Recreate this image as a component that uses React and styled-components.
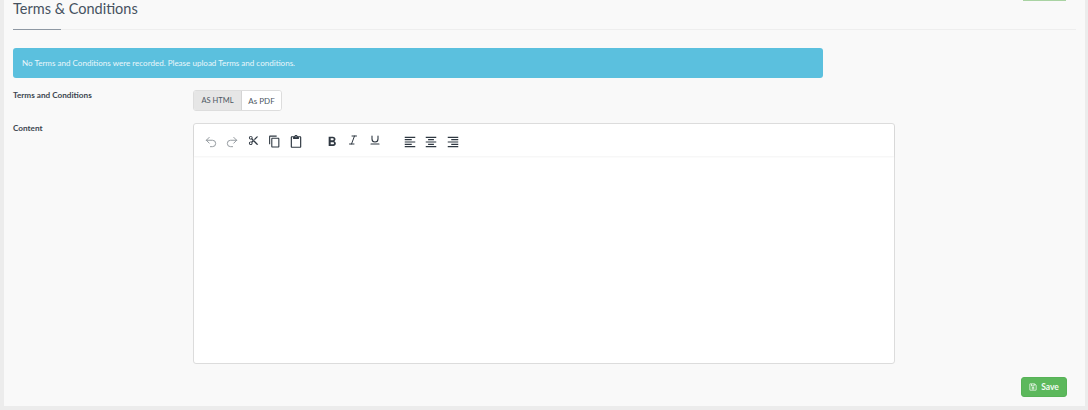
import React from "react";
import styled, { createGlobalStyle } from "styled-components";
import { Undo2, Redo2, Italic, Underline } from "lucide-react";
import {
  MdContentCut,
  MdOutlineContentCopy,
  MdOutlineContentPaste,
  MdFormatBold,
  MdFormatAlignLeft,
  MdFormatAlignCenter,
  MdFormatAlignRight,
} from "react-icons/md";
import { FaRegSave } from "react-icons/fa";

const GlobalStyle = createGlobalStyle`
  html, body {
    margin: 0;
    padding: 0;
    height: 410px;
    overflow: hidden;
    background: #ececec;
    font-family: Lato, "Liberation Sans", sans-serif;
    color: #3a4450;
  }
`;

const Page = styled.div`
  height: 410px;
  padding: 0 3px 4px 4px;
  box-sizing: border-box;
`;

const Panel = styled.div`
  height: 100%;
  background: #f9f9f9;
  padding: 0 9px 0 9px;
  box-sizing: border-box;
  display: flex;
  flex-direction: column;
`;

const Header = styled.div`
  position: relative;
  height: 30px;
  box-sizing: border-box;
  border-bottom: 1px solid #eeeeee;
  display: flex;
  justify-content: space-between;
  align-items: flex-start;
  &::after {
    content: "";
    position: absolute;
    left: 0;
    bottom: -1px;
    width: 48px;
    height: 1px;
    background: #8e98a3;
  }
`;

const Title = styled.h1`
  margin: 0;
  font-size: 14.5px;
  line-height: 17px;
  font-weight: 400;
  color: #46525f;
`;

const TopButton = styled.div`
  width: 43px;
  height: 1px;
  margin-right: 10px;
  background: #a9d3a3;
`;

const Alert = styled.div`
  width: 810px;
  height: 30px;
  margin-top: 18px;
  padding-left: 9px;
  box-sizing: border-box;
  display: flex;
  align-items: center;
  background: #5bc0de;
  border-radius: 3px;
  color: #eaf7fb;
  font-size: 8.05px;
`;

const Row = styled.div`
  display: grid;
  grid-template-columns: 180px 702px;
  margin-top: 12px;
`;

const Label = styled.label`
  font-size: 8.2px;
  line-height: 11px;
  font-weight: 700;
  color: #3c4650;
`;

const Toggle = styled.div`
  display: flex;
  height: 21px;
  width: 89px;
  box-sizing: border-box;
  border: 1px solid #dddddd;
  border-radius: 3px;
  overflow: hidden;
  background: #fff;
`;

const ToggleOption = styled.div`
  flex: ${(p) => (p.$active ? "0 0 47px" : "1")};
  display: flex;
  align-items: center;
  justify-content: center;
  font-size: ${(p) => (p.$active ? 7.5 : 8)}px;
  color: #4d5762;
  background: ${(p) => (p.$active ? "#e6e6e6" : "#fff")};
  border-right: ${(p) => (p.$active ? "1px solid #d4d4d4" : "none")};
`;

const Editor = styled.div`
  height: 241px;
  box-sizing: border-box;
  background: #fff;
  border: 1px solid #dcdcdc;
  border-radius: 3px;
`;

const Toolbar = styled.div`
  height: 32px;
  box-sizing: border-box;
  padding: 3px 0 0 6px;
  display: flex;
  align-items: center;
  box-shadow: 0 1px 2px rgba(0, 0, 0, 0.05);
`;

const ToolGroup = styled.div`
  display: flex;
  margin-right: ${(p) => p.$gap}px;
`;

const Tool = styled.span`
  width: 21.3px;
  display: flex;
  justify-content: center;
  font-size: ${(p) => p.$size || 14}px;
  color: ${(p) => (p.$muted ? "#8d9399" : "#2f3842")};
  svg {
    display: block;
  }
`;

const Footer = styled.div`
  display: flex;
  justify-content: flex-end;
  margin-top: 13px;
  padding-right: 9px;
`;

const SaveButton = styled.button`
  width: 46px;
  height: 20px;
  padding: 0;
  border: 1px solid #57b257;
  border-radius: 3px;
  background: #5cb85c;
  color: #f2faf2;
  font-family: inherit;
  font-size: 8.5px;
  font-weight: 700;
  display: flex;
  align-items: center;
  justify-content: center;
  gap: 4px;
`;

export default function App() {
  return (
    <>
      <GlobalStyle />
      <Page>
        <Panel>
          <Header>
            <Title>Terms &amp; Conditions</Title>
            <TopButton />
          </Header>
          <Alert>No Terms and Conditions were recorded. Please upload Terms and conditions.</Alert>
          <Row>
            <Label>Terms and Conditions</Label>
            <Toggle>
              <ToggleOption $active>AS HTML</ToggleOption>
              <ToggleOption>As PDF</ToggleOption>
            </Toggle>
          </Row>
          <Row>
            <Label>Content</Label>
            <Editor>
              <Toolbar>
                <ToolGroup $gap={15}>
                  <Tool $muted>
                    <Undo2 size={14} strokeWidth={1.6} />
                  </Tool>
                  <Tool $muted>
                    <Redo2 size={14} strokeWidth={1.6} />
                  </Tool>
                  <Tool $size={11}>
                    <MdContentCut />
                  </Tool>
                  <Tool $size={13}>
                    <MdOutlineContentCopy />
                  </Tool>
                  <Tool $size={14}>
                    <MdOutlineContentPaste />
                  </Tool>
                </ToolGroup>
                <ToolGroup $gap={14}>
                  <Tool $size={16}>
                    <MdFormatBold />
                  </Tool>
                  <Tool>
                    <Italic size={12} strokeWidth={2} />
                  </Tool>
                  <Tool>
                    <Underline size={12} strokeWidth={2.2} />
                  </Tool>
                </ToolGroup>
                <ToolGroup $gap={0}>
                  <Tool>
                    <MdFormatAlignLeft />
                  </Tool>
                  <Tool>
                    <MdFormatAlignCenter />
                  </Tool>
                  <Tool>
                    <MdFormatAlignRight />
                  </Tool>
                </ToolGroup>
              </Toolbar>
            </Editor>
          </Row>
          <Footer>
            <SaveButton>
              <FaRegSave size={8} />
              Save
            </SaveButton>
          </Footer>
        </Panel>
      </Page>
    </>
  );
}
